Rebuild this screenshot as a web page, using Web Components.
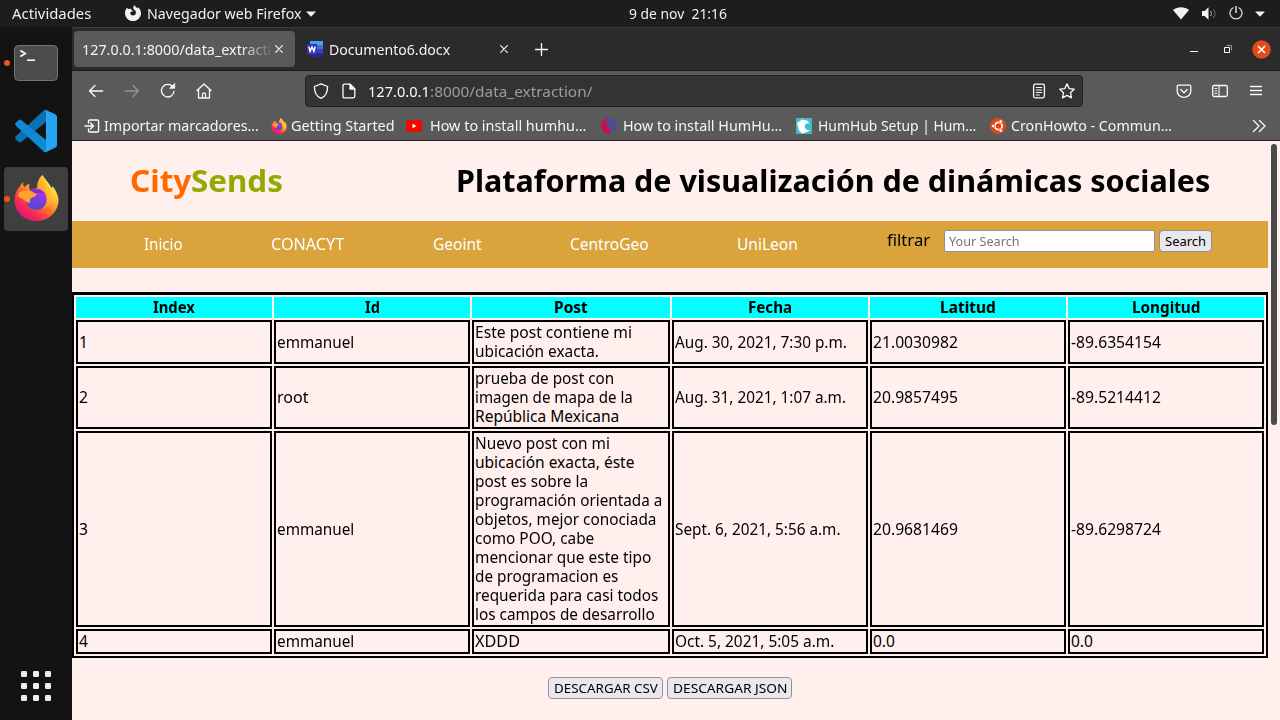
<!DOCTYPE html>
<html lang="es">
<head>
<meta charset="utf-8">
<title>CitySends</title>
<style>
html,body{margin:0;padding:0;width:1280px;height:720px;overflow:hidden}
body{font-family:"Noto Sans","Open Sans",sans-serif;font-size:15.5px;line-height:19px;background:#131313}
</style>
</head>
<body>
<desk-top></desk-top>
<script>
// Text set to a fixed advance width.
customElements.define('fit-text', class extends HTMLElement {
  connectedCallback() {
    if (this.shadowRoot) return;
    const w = +this.getAttribute('w');
    this.attachShadow({mode:'open'}).innerHTML =
      `<style>:host{display:block;flex:none;width:${w}px;white-space:pre}span{display:inline-block;transform-origin:0 50%}</style><span><slot></slot></span>`;
    const fit = () => {
      const s = this.shadowRoot.querySelector('span');
      const n = s.offsetWidth;
      if (n) { s.style.transform = `scaleX(${w / n})`; s.style.marginRight = (w - n) + 'px'; }
    };
    fit(); queueMicrotask(fit);
  }
});

const FOX = `<svg viewBox="0 0 44 46"><defs>
<linearGradient id="a" x1=".85" y1=".1" x2=".2" y2=".95"><stop offset="0" stop-color="#fff44f"/><stop offset=".3" stop-color="#ffbd2f"/><stop offset=".55" stop-color="#ff6b2d"/><stop offset=".8" stop-color="#f5275a"/><stop offset="1" stop-color="#e3127d"/></linearGradient>
<linearGradient id="b" x1=".7" y1="0" x2=".3" y2="1"><stop offset="0" stop-color="#b833e1"/><stop offset=".5" stop-color="#7a3fdc"/><stop offset="1" stop-color="#4a4ad0"/></linearGradient>
<linearGradient id="c" x1="1" y1="0" x2="0" y2="1"><stop offset="0" stop-color="#ffe847"/><stop offset=".5" stop-color="#ffb02e"/><stop offset="1" stop-color="#ff7a1f"/></linearGradient></defs>
<path fill="url(#a)" d="M28 0c2 4 7 8 9 13 1-1 1-2 1-2 4 5 6 10 6 14 0 12-10 21-22 21S0 37 0 25c0-5 2-10 5-13 1-2 2-4 4-5-1 2 0 4 1 5 1-1 3-3 5-3-1 3 0 5 1 6 2-1 5-2 7-2 0-5 3-10 5-13z"/>
<circle cx="22" cy="24.500" r="10.500" fill="url(#b)"/>
<path fill="url(#c)" d="M28 0c-4 3-6 9-5 13 4 1 8 4 9 9 1 5-1 9-4 11 7-1 10-6 10-12 0-8-8-12-10-21z"/>
<path fill="#7b2be0" opacity=".8" d="M15 15c6-3 13-1 16 4-3-2-5-1-6-1-4-1-7 1-9 2z"/>
<path fill="#ffa32b" d="M4 18c2-2 8-3 12-2 2 0 3 2 6 3 0 3-5 3-6 5-1 1 0 3-1 4-4-1-5-4-11-6z"/></svg>`;
const L = (b, v = '0 0 16 16') => `<svg viewBox="${v}" fill="none" stroke="#fbfbfe" stroke-width="1.3" stroke-linecap="round" stroke-linejoin="round">${b}</svg>`;
const ICONS = {
  fox: FOX,
  foxmono: `<svg viewBox="0 0 16 16"><path fill="#f2f2f2" d="M10 0c0 2 1.500 2.500 2.800 3.500 0-.5 0-1-.2-1.500C15 3.500 16 6 16 8.200 16 12.500 12.400 16 8 16S0 12.500 0 8.200C0 6 .8 4 2.200 2.500c.2 1 .8 1.500 1.500 1.500C4.500 3.700 5 3.600 6 4c0 1 1.300 1.500 2.200 1.700-.5 1-1.700.8-2.400 1.300-.9.700-.6 2 .1 2.700 1 1 3 1 4.200 0 1.800-1.700.5-4.200-.9-4.900C7.500 3 8.500 1 10 0z"/></svg>`,
  down: `<svg viewBox="0 0 10 6"><path fill="#f2f2f2" d="M0 .5h10L5 5.800z"/></svg>`,
  wifi: `<svg viewBox="0 0 16 13"><path fill="#f2f2f2" d="M0 3C4.500-.8 11.500-.8 16 3L8 12.500z"/></svg>`,
  vol: `<svg viewBox="0 0 15 13" fill="none"><path fill="#f2f2f2" d="M0 4h2.600L6.500.2v12.600L2.600 9H0z"/><path stroke="#bbb" d="M8.500 4c1.200 1.300 1.200 3.700 0 5"/><path stroke="#777" d="M11 2c2.600 2.400 2.600 6.600 0 9"/></svg>`,
  power: `<svg viewBox="0 0 14 14" fill="none" stroke="#d8d8d8" stroke-width="1.300"><path d="M4.500 1.500a6 6 0 1 0 5 0"/><path stroke="#fff" d="M7 0v7"/></svg>`,
  term: `<svg viewBox="0 0 44 36"><rect x=".5" y=".5" width="43" height="35" rx="4" fill="#4c4c4c" stroke="#747474"/><path d="M6.300 5.500l5 3-5 3" fill="none" stroke="#fff" stroke-width="1.700"/><path d="M13 15.200h8" stroke="#fff" stroke-width="1.500"/></svg>`,
  code: `<svg viewBox="0 0 42 42"><path fill="#0f6fb3" d="M0 28.500l3.800 3.500q1.200.8 2.400 0L31 12V0q-1.500-.2-2.600.8L.5 26.500q-.8 1 0 2z"/><path fill="#1088d2" d="M0 13.500L3.800 10q1.200-.8 2.400 0L31 30v12q-1.500.2-2.600-.8L.5 15.500q-.8-1 0-2z"/><path fill="#26a5f2" d="M31 0l9.600 4.500Q42 5.300 42 7v28q0 1.700-1.400 2.500L31 42q-2 .5-2.800-.8 2.800 1 2.800-1.600V2.400q0-2.600-2.800-1.600Q29 0 31 0z"/></svg>`,
  apps: `<svg viewBox="0 0 30 30" fill="#eeeeec">${[0,12,24].map(y => [0,12,24].map(x => `<rect x="${x}" y="${y}" width="6" height="6" rx="1.200"/>`).join('')).join('')}</svg>`,
  x: L('<path d="M.7.700l6.600 6.600M7.300.700L.7 7.300" stroke-width="1.100"/>', '0 0 8 8'),
  plus: L('<path d="M6.500.5v12M.5 6.500h12"/>', '0 0 13 13'),
  word: `<svg viewBox="0 0 16 16"><path fill="#4ba0f5" d="M3 0h13v4H3z"/><path fill="#3f73d8" d="M3 4h13v4H3z"/><path fill="#3b3fbd" d="M3 8h13v4H3z"/><path fill="#30249a" d="M3 12h13v4H3z"/><path fill="#3534b5" d="M0 3h10v10H0z"/><path d="M1.800 5.500l1.300 4.700L5 6l1.900 4.200L8.200 5.500" fill="none" stroke="#fff" stroke-width="1.500"/></svg>`,
  min: `<svg viewBox="0 0 8 8"><path fill="#fff" d="M0 6h8v1H0z"/></svg>`,
  restore: `<svg viewBox="0 0 8 8" fill="none"><path stroke="#fff" d="M.5 2.500h5v5h-5z"/><path stroke="#999" d="M2.500.500h5v5"/></svg>`,
  close: `<svg viewBox="0 0 19 19"><circle cx="9.500" cy="9.500" r="9.300" fill="#e24b1b"/><path d="M6 6l7 7M13 6l-7 7" stroke="#fff" stroke-width="1.600"/></svg>`,
  back: L('<path d="M14.700 8H1.500M7 2.500L1.500 8 7 13.500"/>'),
  fwd: L('<path d="M1 8h13.500M9 2.500L14.500 8 9 13.500" stroke="#949494"/>'),
  reload: L('<path d="M14 8.500A6.300 6.300 0 1 1 12.500 3.500"/><path d="M10 5.300h4.700V.8z" fill="#fbfbfe" stroke-width=".8"/>'),
  home: L('<path d="M1 7.500L8 1l7 6.500M2.500 6.500V15h11V6.500M6.500 15v-4q0-1.200 1.500-1.200T9.500 11v4"/>'),
  shield: L('<path d="M8 .8L14.600 3.500C14.600 9 12.500 13.500 8 15.300 3.500 13.500 1.400 9 1.400 3.500z"/>'),
  page: L('<path d="M3.500 1.200H9L13.800 6v7.300q0 1.500-1.500 1.500H3.500Q2 14.800 2 13.300V2.700Q2 1.200 3.500 1.200z"/><path d="M9 1.200V6h4.800z" fill="#fbfbfe"/>'),
  reader: L('<rect x="2.600" y="1.200" width="10.800" height="13.600" rx="1.500"/><path d="M5.300 4.500h5.400M5.300 7h5.400M5.300 9.500h5.400M5.300 12h3" stroke-width="1.100"/>'),
  star: L('<path d="M8 .9l2.200 4.700 5 .6-3.700 3.500 1 5.200L8 12.400l-4.500 2.500 1-5.200L.8 6.200l5-.6z"/>'),
  pocket: L('<path d="M2.500 2.200h11q1.300 0 1.300 1.300V8A6.800 6.300 0 0 1 1.200 8V3.500q0-1.300 1.300-1.300zM4.700 6.500L8 9.700l3.300-3.200"/>'),
  side: L('<rect x=".7" y="2.500" width="14.600" height="11" rx="1.500"/><path d="M7 2.500v11M3 5.500h1.700M3 8h1.700M3 10.500h1.700" stroke-width="1.100"/>'),
  menu: L('<path d="M2 3.500h12M2 7.500h12M2 11.500h12" stroke-linecap="butt"/>'),
  imp: L('<path d="M1 8h8.500M6.500 5l3 3-3 3M4.500 5V3.300q0-1.300 1.300-1.300h7.500q1.300 0 1.300 1.300v9.400q0 1.300-1.300 1.300h-7.500q-1.300 0-1.300-1.300V11" stroke-width="1.400"/>'),
  yt: `<svg viewBox="0 0 16 16"><rect y="2.300" width="16" height="11.500" rx="2.500" fill="#f00"/><path fill="#fff" d="M6.500 5.800v4.500L10.500 8z"/></svg>`,
  hum: `<svg viewBox="0 0 16 16"><path fill="#c90f48" d="M8 0a8 8 0 0 0-3 15.400q3 1.200 4-1.400c1-3-1.600-4-2-7q-.3-4 1-7z"/><path fill="#4a4d9c" d="M6.500.200Q12-.8 14.800 4c2.300 4 .5 9.500-4.300 11.500q-2-2-.5-5.500Q11 6 8.500 6.500q-2 .5-1.500 4Q4 5 6.500.200z"/></svg>`,
  hub: `<svg viewBox="0 0 16 16"><path fill="#43bccd" d="M0 0h16v16H0z"/><path fill="#fff" d="M1 5l5-3.500 5 1L14 5.500 9.500 6l-1 3 2 2.500 3.500.500-3 2-5 1.500-3-3z"/><path d="M14 6.700q-1.700-1.300-3.200 0t0 3.400 3.200.2" stroke="#43bccd" stroke-width="1.500" fill="none"/></svg>`,
  ubu: `<svg viewBox="0 0 16 16"><circle cx="8" cy="8" r="8" fill="#dd4814"/><circle cx="8.500" cy="8" r="3.600" fill="none" stroke="#fff" stroke-width="1.700"/><g fill="#fff" stroke="#dd4814" stroke-width=".7"><circle cx="3.200" cy="8" r="1.700"/><circle cx="10.700" cy="3.500" r="1.700"/><circle cx="10.700" cy="12.500" r="1.700"/></g></svg>`,
  more: L('<path d="M1.500 1.500L7 7l-5.500 5.500M7.500 1.500L13 7l-5.500 5.500"/>', '0 0 14 14')
};
customElements.define('ui-icon', class extends HTMLElement {
  connectedCallback() {
    if (this.shadowRoot) return;
    const w = this.getAttribute('w') || 16, h = this.getAttribute('h') || w;
    this.attachShadow({mode:'open'}).innerHTML = `<style>:host{display:block;flex:none;width:${w}px;height:${h}px}svg{display:block;width:100%;height:100%}</style>${ICONS[this.getAttribute('name')]}`;
  }
});

const define = (name, html) => customElements.define(name, class extends HTMLElement {
  connectedCallback() { if (!this.shadowRoot) this.attachShadow({mode:'open'}).innerHTML = html; }
});

define('top-bar', `<style>
:host{display:flex;align-items:center;height:27px;background:#1d1d1d;color:#f0f0f0;font-size:14.300px;box-sizing:border-box;padding-left:12px}
</style>
<fit-text w="79">Actividades</fit-text><ui-icon name="foxmono" w="16" style="margin:0 6px 2px 34px"></ui-icon>
<fit-text w="155">Navegador web Firefox</fit-text><ui-icon name="down" w="10" h="6" style="margin-left:4px"></ui-icon>
<fit-text w="98" style="margin:0 0 1px 313px">9 de nov  21:16</fit-text>
<ui-icon name="wifi" w="16" h="13" style="margin-left:446px"></ui-icon><ui-icon name="vol" w="15" h="13" style="margin-left:13px"></ui-icon>
<ui-icon name="power" w="14" style="margin:0 0 1px 12px"></ui-icon><ui-icon name="down" w="10" h="6" style="margin-left:12px"></ui-icon>`);

define('app-dock', `<style>
:host{display:flex;flex-direction:column;box-sizing:border-box;width:72px;height:693px;background:#131313;padding:4px 4px 19px;gap:4px}
div{width:64px;height:64px;border-radius:4px;display:flex;align-items:center;justify-content:center;position:relative}
.on{background:#3f3f3f}
.run::before{content:"";position:absolute;left:0;top:29px;width:6px;height:6px;border-radius:50%;background:#e95420}
.apps{height:30px;margin-top:auto}
</style>
<div class="run"><ui-icon name="term" w="44" h="36"></ui-icon></div>
<div><ui-icon name="code" w="42"></ui-icon></div>
<div class="on run"><ui-icon name="fox" w="45" h="46" style="margin-bottom:2px"></ui-icon></div>
<div class="apps"><ui-icon name="apps" w="30"></ui-icon></div>`);

define('tab-strip', `<style>
:host{display:flex;align-items:center;box-sizing:border-box;height:44px;background:#2b2b2b;border-top:1px solid #3b3b3b;border-bottom:1px solid #1c1c1f;padding:0 9px 0 2px;color:#f4f4f4;font-size:14.700px}
.tab{display:flex;align-items:center;box-sizing:border-box;width:221px;height:36px;border-radius:4px;background:#5a5a5a;padding-left:8px}
.clip{width:189px;overflow:hidden;margin-right:4px;-webkit-mask-image:linear-gradient(90deg,#000 158px,transparent 192px);mask-image:linear-gradient(90deg,#000 158px,transparent 192px)}
</style>
<div class="tab"><div class="clip"><fit-text w="212">127.0.0.1:8000/data_extraction/</fit-text></div><ui-icon name="x" w="8"></ui-icon></div>
<ui-icon name="word" w="16" style="margin:0 6px 0 12px"></ui-icon><fit-text w="121">Documento6.docx</fit-text>
<ui-icon name="x" w="8" style="margin-left:50px"></ui-icon><ui-icon name="plus" w="13" style="margin-left:27px"></ui-icon>
<ui-icon name="min" w="8" style="margin-left:auto"></ui-icon><ui-icon name="restore" w="8" style="margin-left:26px"></ui-icon><ui-icon name="close" w="19" style="margin-left:20px"></ui-icon>`);

define('nav-bar', `<style>
:host{display:flex;align-items:center;box-sizing:border-box;height:40px;background:#5a5a5a;padding:0 16px;font-size:15.300px}
.tools{display:flex;gap:20px;width:217px}
.url{display:flex;align-items:center;box-sizing:border-box;width:778px;height:32px;border:1px solid #222;border-radius:4px;background:#333;padding:0 7px;color:#fbfbfe}
.end{display:flex;gap:20px;margin-left:auto}
</style>
<div class="tools"><ui-icon name="back"></ui-icon><ui-icon name="fwd"></ui-icon><ui-icon name="reload"></ui-icon><ui-icon name="home"></ui-icon></div>
<div class="url"><ui-icon name="shield"></ui-icon><ui-icon name="page" style="margin:0 11px 0 12px"></ui-icon>
<fit-text w="62">127.0.0.1</fit-text><fit-text w="162" style="color:#9c9c9c">:8000/data_extraction/</fit-text>
<ui-icon name="reader" style="margin-left:auto"></ui-icon><ui-icon name="star" style="margin-left:12px"></ui-icon></div>
<div class="end"><ui-icon name="pocket"></ui-icon><ui-icon name="side"></ui-icon><ui-icon name="menu"></ui-icon></div>`);

define('bookmark-bar', `<style>
:host{display:flex;align-items:center;box-sizing:border-box;height:30px;background:#5a5a5a;border-bottom:1px solid #241d20;padding:0 14px 0 12px;color:#f6f6f6;font-size:14.700px}
div{display:flex;align-items:center;gap:6px}
</style>
<div style="gap:4px"><ui-icon name="imp"></ui-icon><fit-text w="155">Importar marcadores…</fit-text></div>
<div style="margin-left:12px;gap:4px"><ui-icon name="fox" w="16"></ui-icon><fit-text w="104">Getting Started</fit-text></div>
<div style="margin-left:11px;gap:8px"><ui-icon name="yt"></ui-icon><fit-text w="156">How to install humhu…</fit-text></div>
<div style="margin-left:15px"><ui-icon name="hum"></ui-icon><fit-text w="159">How to install HumHu…</fit-text></div>
<div style="margin-left:14px"><ui-icon name="hub"></ui-icon><fit-text w="158">HumHub Setup | Hum…</fit-text></div>
<div style="margin-left:14px;gap:5px"><ui-icon name="ubu"></ui-icon><fit-text w="161">CronHowto - Commun…</fit-text></div>
<ui-icon name="more" w="14" style="margin-left:auto"></ui-icon>`);

define('site-header', `<style>
:host{display:flex;align-items:center;box-sizing:border-box;height:80px;padding:0 0 2px 58px;font-size:31px;font-weight:700;line-height:38px;color:#000}
h1,h2{display:flex;margin:0;font:inherit}
</style>
<h1><fit-text w="61" style="color:#ff6a00">City</fit-text><fit-text w="92" style="color:#93a800">Sends</fit-text></h1>
<h2 style="margin-left:173px"><fit-text w="754">Plataforma de visualización de dinámicas sociales</fit-text></h2>`);

define('site-nav', `<style>
:host{display:flex;align-items:center;box-sizing:border-box;height:47px;background:#daa33b;color:#fff;padding-left:72px}
.search{display:flex;align-items:center;margin:-8px 0 0 88px;color:#000}
.in,.btn{display:flex;align-items:center;box-sizing:border-box;height:22px;border:1px solid #8f8f9d;font-size:13px}
.in{width:211px;background:#fff;border-radius:2px;color:#757575;padding-left:4px;margin:1px 4px 0 15px}
.btn{width:53px;margin-top:1px;background:#e9e9ed;border-radius:4px;justify-content:center}
</style>
<fit-text w="39">Inicio</fit-text><fit-text w="73" style="margin-left:88px">CONACYT</fit-text><fit-text w="49" style="margin-left:89px">Geoint</fit-text>
<fit-text w="79" style="margin-left:88px">CentroGeo</fit-text><fit-text w="61" style="margin-left:88px">UniLeon</fit-text>
<div class="search"><fit-text w="43" style="margin-left:1px;margin-right:-1px">filtrar</fit-text><div class="in"><fit-text w="71">Your Search</fit-text></div><div class="btn"><fit-text w="41">Search</fit-text></div></div>`);

const ROWS = [
  [[['1',9]],[['emmanuel',77]],[['Este post contiene mi',157],['ubicación exacta.',124]],[['Aug. 30, 2021, 7:30 p.m.',172]],[['21.0030982',85]],[['-89.6354154',90]]],
  [[['2',9]],[['root',31]],[['prueba de post con',139],['imagen de mapa de la',158],['República Mexicana',144]],[['Aug. 31, 2021, 1:07 a.m.',171]],[['20.9857495',85]],[['-89.5214412',90]]],
  [[['3',9]],[['emmanuel',77]],[['Nuevo post con mi',135],['ubicación exacta, éste',159],['post es sobre la',113],['programación orientada a',187],['objetos, mejor conociada',181],['como POO, cabe',119],['mencionar que este tipo',176],['de programacion es',143],['requerida para casi todos',183],['los campos de desarrollo',180]],[['Sept. 6, 2021, 5:56 a.m.',166]],[['20.9681469',85]],[['-89.6298724',90]]],
  [[['4',9]],[['emmanuel',77]],[['XDDD',45]],[['Oct. 5, 2021, 5:05 a.m.',159]],[['0.0',22]],[['0.0',22]]]
];
const HEAD = [['Index',42],['Id',15],['Post',34],['Fecha',44],['Latitud',56],['Longitud',68]];
define('data-table', `<style>
:host{display:grid;grid-template-columns:196px 196px 198px 196px 196px 196px;gap:2px;box-sizing:border-box;width:1196px;border:2px solid #000;border-top-width:3px;padding:2px;color:#000}
.h{display:flex;justify-content:center;background:#0ff;padding:1px;font-weight:700}
.c{display:flex;flex-direction:column;justify-content:center;border:2px solid #000;padding:1px}
.up fit-text:only-child{transform:translateY(-.5px)}
</style>` + HEAD.map(([t, w]) => `<div class="h"><fit-text w="${w}">${t}</fit-text></div>`).join('') +
  ROWS.map((r, i) => r.map(c => `<div class="c${i % 2 ? '' : ' up'}">${c.map(([t, w]) => `<fit-text w="${w}">${t}</fit-text>`).join('')}</div>`).join('')).join(''));

define('web-page', `<style>
:host{display:flex;height:579px;background:#fff0ee;overflow:hidden}
main{width:1196px}
data-table{margin-top:24px}
.dl{display:flex;justify-content:center;gap:4px;margin-top:19px;font-size:13px;color:#000}
.dl div{display:flex;align-items:center;justify-content:center;box-sizing:border-box;height:22px;border:1px solid #8f8f9d;border-radius:4px;background:#e9e9ed}
.bar{width:12px;display:flex;justify-content:center;padding-top:3px;box-sizing:border-box}
.bar i{width:6px;height:281px;border-radius:3px;background:#4a4a4a}
</style>
<main><site-header></site-header><site-nav></site-nav><data-table></data-table>
<div class="dl"><div style="width:115px"><fit-text w="104">DESCARGAR CSV</fit-text></div><div style="width:125px"><fit-text w="114">DESCARGAR JSON</fit-text></div></div></main>
<div class="bar"><i></i></div>`);

define('desk-top', `<style>
:host{display:block;width:1280px;height:720px;overflow:hidden}
.row{display:flex}
.win{width:1208px}
</style>
<top-bar></top-bar>
<div class="row"><app-dock></app-dock><div class="win"><tab-strip></tab-strip><nav-bar></nav-bar><bookmark-bar></bookmark-bar><web-page></web-page></div></div>`);
</script>
</body>
</html>
